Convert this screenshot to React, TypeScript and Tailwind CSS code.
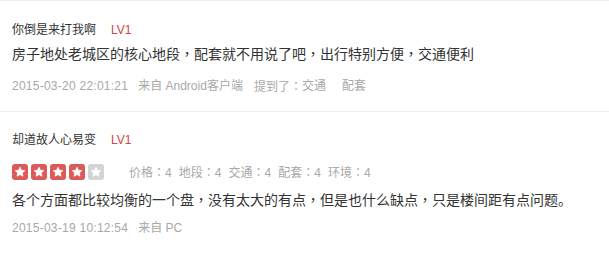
import React from "react";

const font = {
  fontFamily: '"Liberation Sans", Arial, "Noto Sans CJK SC", sans-serif',
};

// centred full-width punctuation, as in the screenshot
function P({ c }: { c: string }) {
  return <span className="font-['Noto_Sans_CJK_TC',sans-serif]">{c}</span>;
}

function Stars({ score }: { score: number }) {
  return (
    <div className="flex gap-[3px]">
      {[1, 2, 3, 4, 5].map((i) => (
        <span
          key={i}
          className={
            "flex h-[16px] w-[16px] items-center justify-center rounded-[3px] " +
            (i <= score ? "bg-[#dd5a5a]" : "bg-[#d4d4d4]")
          }
        >
          <svg viewBox="0 0 24 24" width="12" height="12">
            <path
              d="M12 2.5l2.9 6 6.6.8-4.9 4.6 1.3 6.5L12 17.2l-5.9 3.2 1.3-6.5-4.9-4.6 6.6-.8z"
              fill="#fff"
              stroke="#fff"
              strokeLinejoin="round"
              strokeWidth="1.5"
            />
          </svg>
        </span>
      ))}
    </div>
  );
}

export default function App() {
  const ratings = ["价格", "地段", "交通", "配套", "环境"];
  return (
    <div className="w-[609px] h-[257px] bg-white text-[#333]" style={font}>
      <div className="border-t border-b border-[#eeeeee] px-3 pt-[19px] pb-[15px]">
        <div className="flex h-[20px] items-center text-[12px] text-[#333]">
          <span>你倒是来打我啊</span>
          <span className="ml-[15px] text-[#cf4446]">LV1</span>
        </div>
        <div className="mt-[2px] flex h-[24px] items-center text-[14px] text-[#333]">
          <span>
            房子地处老城区的核心地段<P c="，" />配套就不用说了吧<P c="，" />出行特别方便<P c="，" />交通便利
          </span>
        </div>
        <div className="mt-[10px] flex h-[20px] items-center text-[12px] text-[#a8a8a8]">
          <span className="tracking-[0.25px]">2015-03-20 22:01:21</span>
          <span className="ml-[10px]">来自 Android客户端</span>
          <span className="ml-[11px]">
            提到了<P c="：" />
          </span>
          <span>交通</span>
          <span className="ml-[16px]">配套</span>
        </div>
      </div>
      <div className="px-3 pt-[18px]">
        <div className="flex h-[20px] items-center text-[12px] text-[#333]">
          <span>却道故人心易变</span>
          <span className="ml-[15px] text-[#cf4446]">LV1</span>
        </div>
        <div className="mt-[12px] flex h-[20px] items-center">
          <Stars score={4} />
          <div className="ml-[25px] flex gap-[7px] text-[12px] text-[#a8a8a8]">
            {ratings.map((r) => (
              <span key={r}>
                {r}
                <P c="：" />4
              </span>
            ))}
          </div>
        </div>
        <div className="mt-[6px] flex h-[24px] items-center text-[14px] text-[#333]">
          <span>
            各个方面都比较均衡的一个盘<P c="，" />没有太大的有点<P c="，" />但是也什么缺点<P c="，" />只是楼间距有点问题。
          </span>
        </div>
        <div className="mt-[6px] flex h-[20px] items-center text-[12px] text-[#a8a8a8]">
          <span className="tracking-[0.25px]">2015-03-19 10:12:54</span>
          <span className="ml-[10px]">来自 PC</span>
        </div>
      </div>
    </div>
  );
}
